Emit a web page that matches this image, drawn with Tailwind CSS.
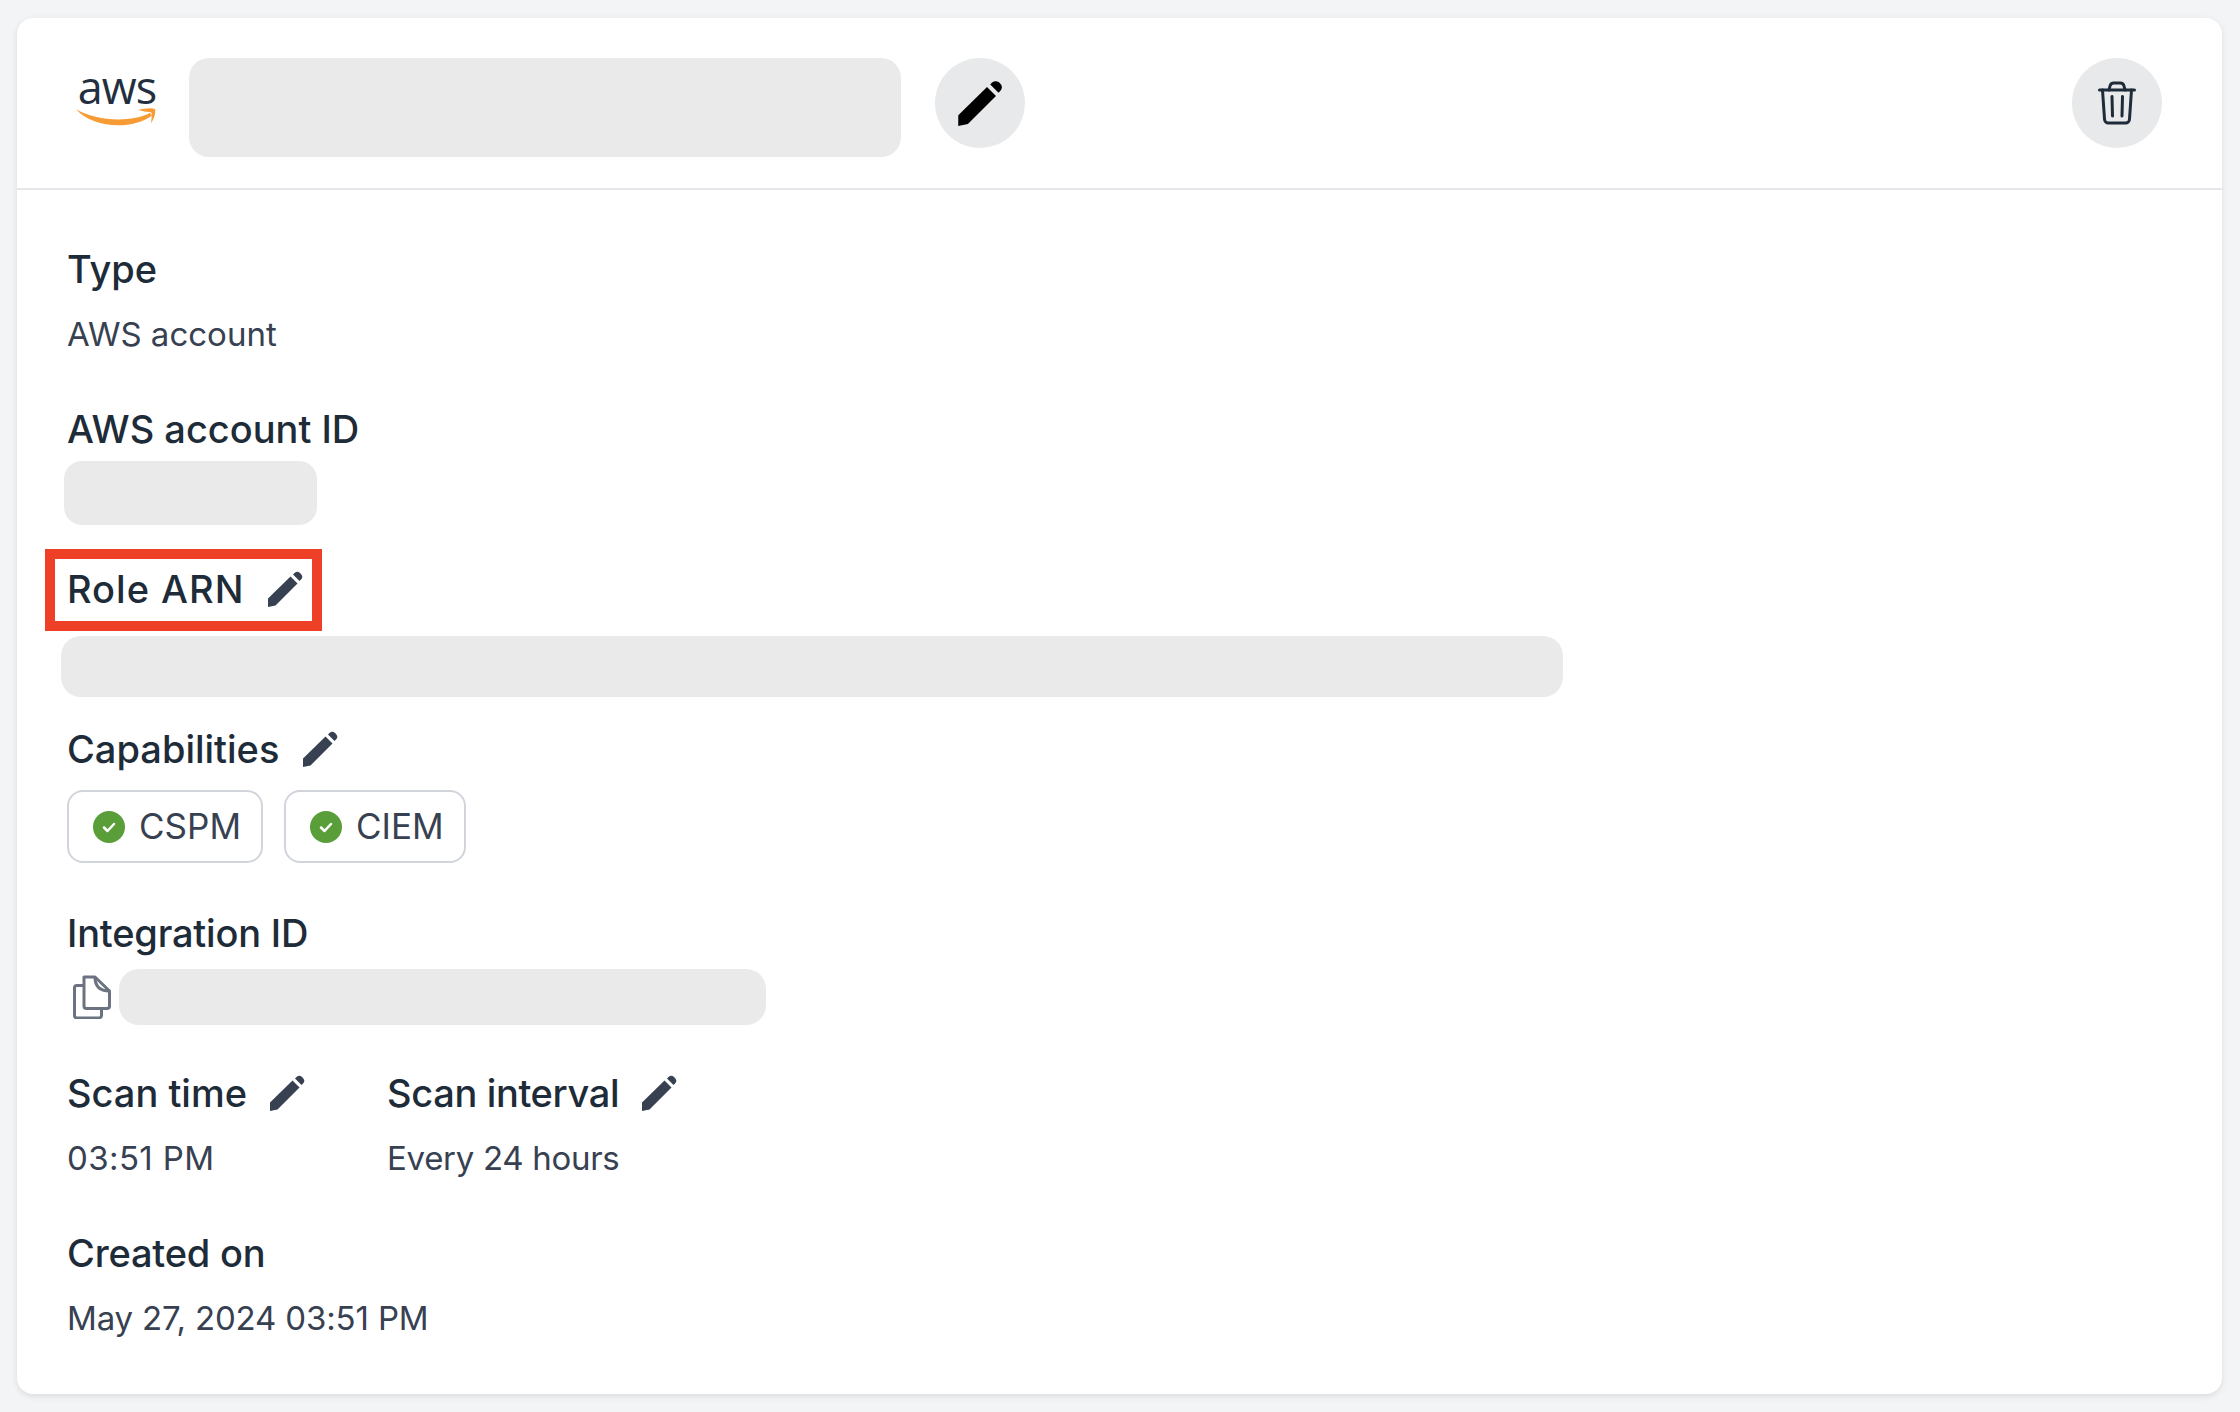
<!DOCTYPE html>
<html lang="en">
<head>
    <meta charset="UTF-8">
    <title>AWS account integration</title>
    <script src="https://cdn.jsdelivr.net/npm/@tailwindcss/browser@4"></script>
</head>
<body class="bg-[#f3f4f6] font-['Inter',sans-serif]">
    <div class="w-[2240px] h-[1412px] pt-[18px] pl-[17px]">
        <div class="relative w-[2205px] h-[1376px] bg-white rounded-[16px] shadow-[0_2px_6px_rgba(0,0,0,0.1)]">
            <!-- header -->
            <div class="h-[172px] flex items-start pt-[40px] pl-[58px] pr-[60px] border-b-2 border-[#e5e7eb]">
                <div class="w-[84px] h-[60px] mt-[14px] flex flex-col items-center">
                    <span class="h-[32px] leading-[30px] text-[45px] font-medium font-['Open_Sans',sans-serif] text-[#232f3e] tracking-[-1px]">aws</span>
                    <svg class="w-[84px] h-[20px] mt-[2px]" viewBox="0 0 84 20" fill="#f79c34">
                        <path d="M1 3C20 15 56 17 75 7l2 2.500C58 24 18 23 1 3z"/>
                        <path d="M63 4c6-1.500 13-2.500 17-1 1 4-1 10-4 14 .5-4 1-8 .5-10.500-3-.6-7-.7-13.500-2.500z"/>
                    </svg>
                </div>
                <div class="w-[712px] h-[99px] ml-[30px] bg-[#eaeaea] rounded-[20px]"></div>
                <button class="w-[90px] h-[90px] ml-[34px] rounded-full bg-[#e8e9eb] flex items-center justify-center">
                    <svg class="w-[46px] h-[46px]" viewBox="0 0 36 36" fill="#000"><path d="M1 27.500 23.500 5.500l7 7L8.500 34.500 1 36z"/><path d="M26 3.500l1.500-1.500a4 4 0 0 1 5.500 0l1 1a4 4 0 0 1 0 5.500L32.500 10z"/></svg>
                </button>
                <button class="w-[90px] h-[90px] ml-auto rounded-full bg-[#e8e9eb] flex items-center justify-center">
                    <svg class="w-[38px] h-[44px]" viewBox="0 0 38 44" fill="none" stroke="#1e2b38" stroke-width="3" stroke-linecap="round" stroke-linejoin="round"><path d="M1.500 9h35"/><path d="M11 9l1-4a4 4 0 0 1 4-3h6a4 4 0 0 1 4 3l1 4"/><path d="M4.500 9l2 29a4 4 0 0 0 4 4h17a4 4 0 0 0 4-4l2-29"/><path d="M14 15.500l.5 19.500"/><path d="M24.500 15.500l-.5 19.500"/></svg>
                </button>
            </div>

            <!-- details -->
            <div class="pt-[51px] pl-[50px] flex flex-col text-[#374151] text-[33px]">
                <section class="h-[160px]">
                    <h3 class="h-[56px] leading-[56px] text-[38px] text-[#1e2b38] font-medium">Type</h3>
                    <p class="mt-[13px] h-[48px] leading-[48px]">AWS account</p>
                </section>
                <section class="h-[160px]">
                    <h3 class="h-[56px] leading-[56px] text-[38px] text-[#1e2b38] font-medium">AWS account ID</h3>
                    <div class="mt-[4px] -ml-[3px] w-[253px] h-[64px] bg-[#eaeaea] rounded-[18px]"></div>
                </section>
                <section class="h-[160px]">
                    <h3 class="h-[56px] leading-[56px] text-[38px] tracking-[1px] text-[#1e2b38] font-medium flex items-center gap-[23px]">Role ARN
                        <svg class="w-[36px] h-[36px]" viewBox="0 0 36 36" fill="#374151"><path d="M1 27.500 23.500 5.500l7 7L8.500 34.500 1 36z"/><path d="M26 3.500l1.500-1.500a4 4 0 0 1 5.500 0l1 1a4 4 0 0 1 0 5.500L32.500 10z"/></svg>
                    </h3>
                    <div class="mt-[19px] -ml-[6px] w-[1502px] h-[61px] bg-[#eaeaea] rounded-[20px]"></div>
                </section>
                <section class="h-[184px]">
                    <h3 class="h-[56px] leading-[56px] text-[38px] text-[#1e2b38] font-medium flex items-center gap-[23px]">Capabilities
                        <svg class="w-[36px] h-[36px]" viewBox="0 0 36 36" fill="#374151"><path d="M1 27.500 23.500 5.500l7 7L8.500 34.500 1 36z"/><path d="M26 3.500l1.500-1.500a4 4 0 0 1 5.500 0l1 1a4 4 0 0 1 0 5.500L32.500 10z"/></svg>
                    </h3>
                    <div class="mt-[13px] flex gap-[21px]">
                        <span class="w-[196px] h-[73px] pl-[24px] flex items-center gap-[14px] text-[35px] border-2 border-[#d1d5db] rounded-[16px]">
                            <svg class="w-[32px] h-[32px]" viewBox="0 0 32 32"><circle cx="16" cy="16" r="16" fill="#5a9e3a"/><path d="M11 16.500l3.500 3.500 6.500-7" fill="none" stroke="#fff" stroke-width="2.500" stroke-linecap="round" stroke-linejoin="round"/></svg>
                            CSPM
                        </span>
                        <span class="w-[182px] h-[73px] pl-[24px] flex items-center gap-[14px] text-[35px] border-2 border-[#d1d5db] rounded-[16px]">
                            <svg class="w-[32px] h-[32px]" viewBox="0 0 32 32"><circle cx="16" cy="16" r="16" fill="#5a9e3a"/><path d="M11 16.500l3.500 3.500 6.500-7" fill="none" stroke="#fff" stroke-width="2.500" stroke-linecap="round" stroke-linejoin="round"/></svg>
                            CIEM
                        </span>
                    </div>
                </section>
                <section class="h-[160px]">
                    <h3 class="h-[56px] leading-[56px] text-[38px] tracking-[-0.2px] text-[#1e2b38] font-medium">Integration ID</h3>
                    <div class="mt-[8px] flex items-center">
                        <svg class="ml-[6px] w-[38px] h-[44px]" viewBox="0 0 38 44" fill="none" stroke="#6b7280" stroke-width="3" stroke-linejoin="round"><path d="M11 2h11l14.500 14v15a2.500 2.500 0 0 1-2.500 2.500H13.500A2.500 2.500 0 0 1 11 31z"/><path d="M22 2c0 8 4 14 14.500 14"/><path d="M11 10.500H4A2.500 2.500 0 0 0 1.500 13v28A2.500 2.500 0 0 0 4 43h22a2.500 2.500 0 0 0 2.500-2.500v-7"/></svg>
                        <div class="ml-[8px] w-[647px] h-[56px] bg-[#eaeaea] rounded-[20px]"></div>
                    </div>
                </section>
                <section class="h-[160px] flex">
                    <div class="w-[320px]">
                        <h3 class="h-[56px] leading-[56px] text-[38px] text-[#1e2b38] font-medium flex items-center gap-[22px]">Scan time
                            <svg class="w-[36px] h-[36px]" viewBox="0 0 36 36" fill="#374151"><path d="M1 27.500 23.500 5.500l7 7L8.500 34.500 1 36z"/><path d="M26 3.500l1.500-1.500a4 4 0 0 1 5.500 0l1 1a4 4 0 0 1 0 5.500L32.500 10z"/></svg>
                        </h3>
                        <p class="mt-[13px] h-[48px] leading-[48px] tracking-[0.4px]">03:51 PM</p>
                    </div>
                    <div>
                        <h3 class="h-[56px] leading-[56px] text-[38px] tracking-[-0.35px] text-[#1e2b38] font-medium flex items-center gap-[22px]">Scan interval
                            <svg class="w-[36px] h-[36px]" viewBox="0 0 36 36" fill="#374151"><path d="M1 27.500 23.500 5.500l7 7L8.500 34.500 1 36z"/><path d="M26 3.500l1.500-1.500a4 4 0 0 1 5.500 0l1 1a4 4 0 0 1 0 5.500L32.500 10z"/></svg>
                        </h3>
                        <p class="mt-[13px] h-[48px] leading-[48px] tracking-[-0.3px]">Every 24 hours</p>
                    </div>
                </section>
                <section>
                    <h3 class="h-[56px] leading-[56px] text-[38px] tracking-[-0.2px] text-[#1e2b38] font-medium">Created on</h3>
                    <p class="mt-[13px] h-[48px] leading-[48px] tracking-[-0.15px]">May 27, 2024 03:51 PM</p>
                </section>
            </div>

            <!-- annotation box drawn on top of the screenshot -->
            <div class="absolute left-[28px] top-[531px] w-[277px] h-[82px] border-[10px] border-[#ee4026]"></div>
        </div>
    </div>
</body>
</html>
